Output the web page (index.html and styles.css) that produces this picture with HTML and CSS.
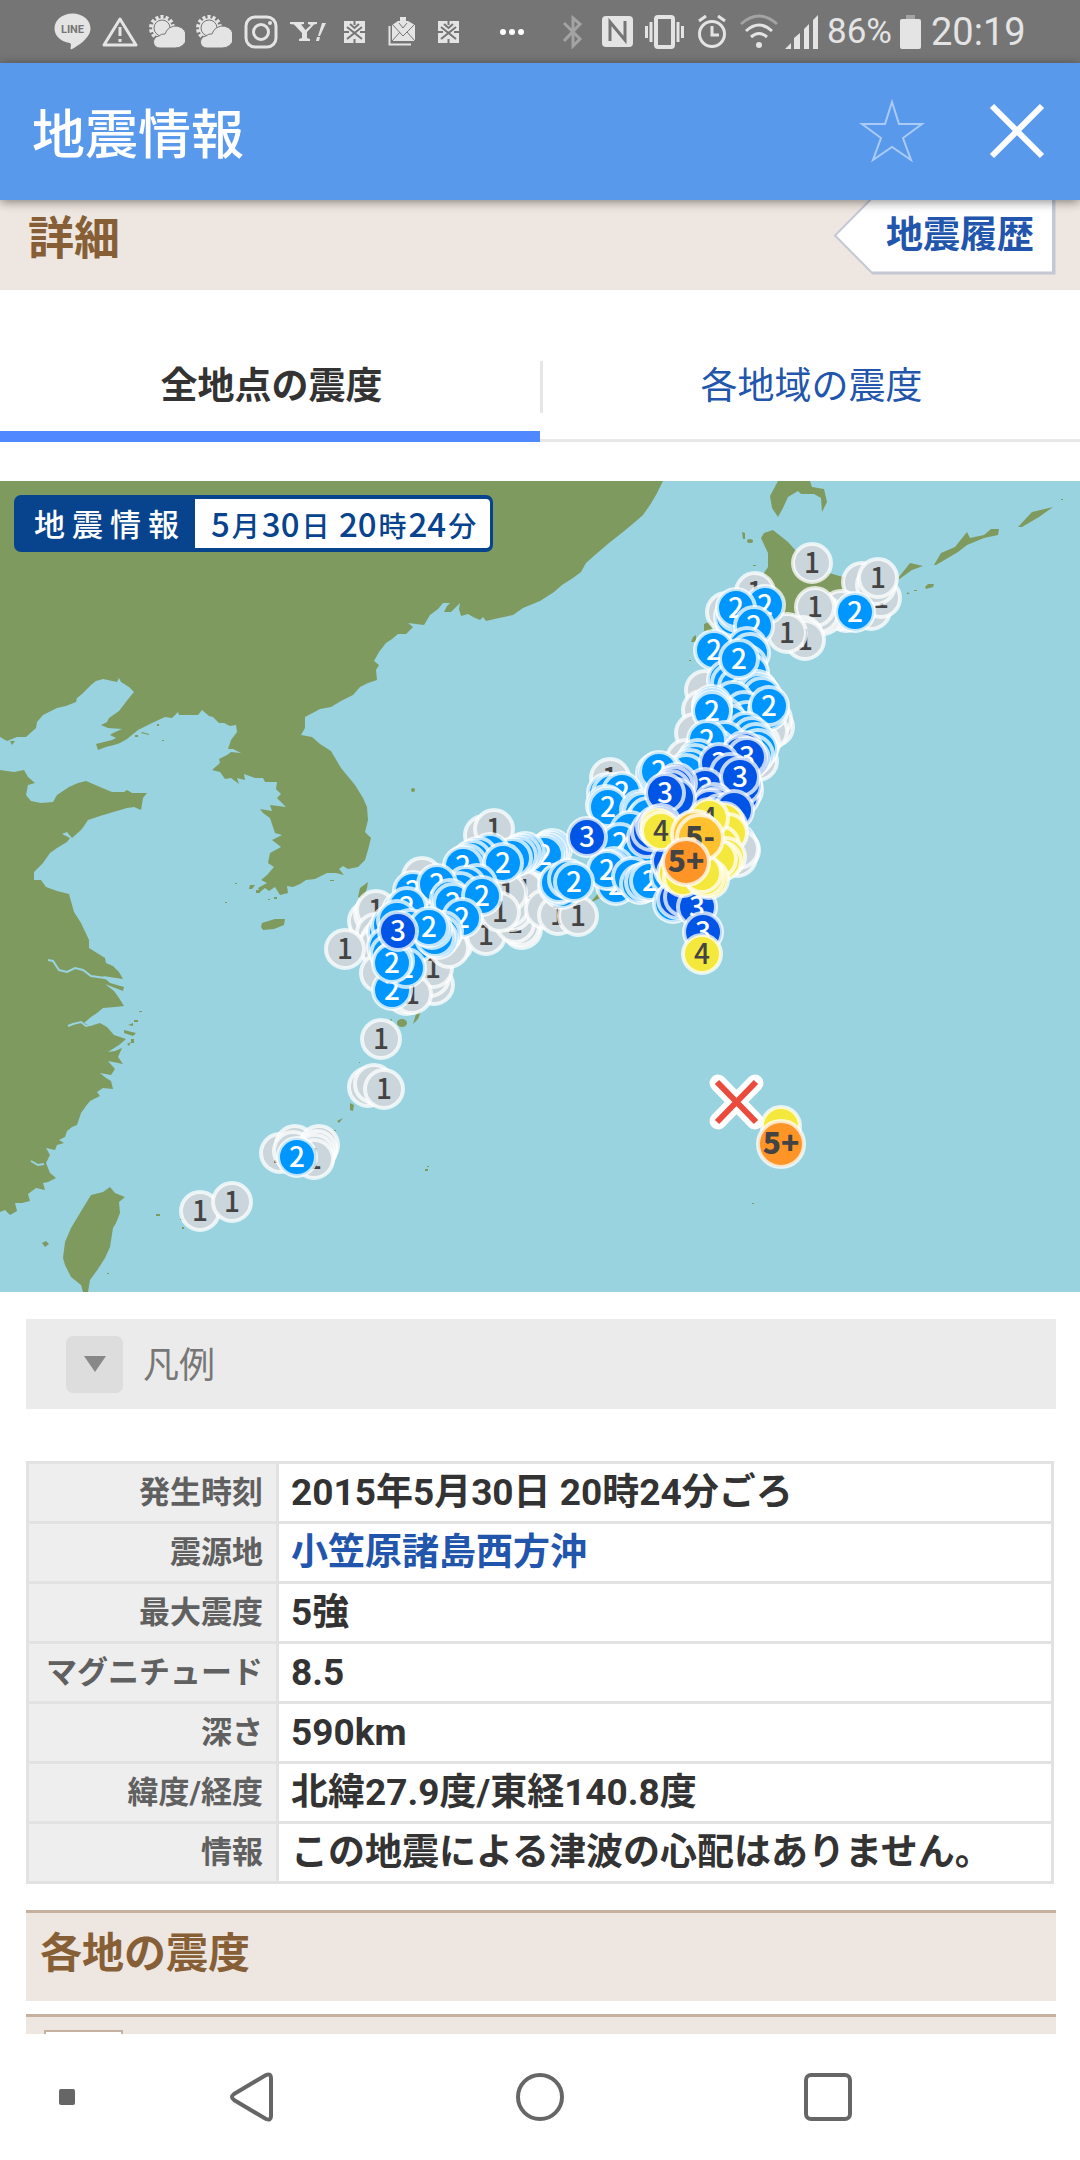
FILE: index.html
```html
<!DOCTYPE html>
<html lang="ja">
<head>
  <meta charset="utf-8">
  <meta name="viewport" content="width=device-width, initial-scale=1">
  <title>地震情報</title>
  <link rel="stylesheet" href="styles.css">
</head>
<body>
  <div class="status">
    <span class="cell"><svg width="37" height="37" viewBox="0 0 37 37"><path class="fill" d="M18.500 .500C8.500.500.500 7 .500 15.500c0 7.500 6.500 13 15 14.500 2 .500 1.500 2 1 5.500 0 .700.500 1 1.500.500C24 33 36.500 25 36.500 15.500 36.500 7 28.500.500 18.500.500z"/><text class="line-text" x="18.500" y="20">LINE</text></svg></span>
    <span class="cell"><svg width="36" height="32" viewBox="0 0 36 32"><path class="line" stroke-width="3" stroke-linejoin="round" d="M18 3 34 29H2z"/><path class="line" stroke-width="3" d="M18 11v9M18 23v3"/></svg></span>
    <span class="cell"><svg width="36" height="34" viewBox="0 0 36 34"><circle class="line" stroke-width="4" stroke-dasharray="3 2" cx="13" cy="13" r="11"/><circle class="fill" cx="13" cy="13" r="10"/><circle class="cut" cx="13" cy="13" r="8"/><path class="fill cloud" d="M11 33a6 6 0 0 1-1-12 7 7 0 0 1 6-2 11 11 0 1 1 10 14z"/></svg></span>
    <span class="cell"><svg width="36" height="34" viewBox="0 0 36 34"><circle class="line" stroke-width="4" stroke-dasharray="3 2" cx="13" cy="13" r="11"/><circle class="fill" cx="13" cy="13" r="10"/><circle class="cut" cx="13" cy="13" r="8"/><path class="fill cloud" d="M11 33a6 6 0 0 1-1-12 7 7 0 0 1 6-2 11 11 0 1 1 10 14z"/></svg></span>
    <span class="cell"><svg width="34" height="34" viewBox="0 0 34 34"><rect class="line" stroke-width="3" x="2" y="2" width="30" height="30" rx="9"/><circle class="line" stroke-width="3" cx="17" cy="17" r="7.500"/><circle class="fill" cx="26" cy="8" r="2"/></svg></span>
    <span class="cell"><svg width="36" height="20" viewBox="0 0 36 20"><path class="fill" d="M0 0h14v2l-3 .500 4.500 5.500L21 3l-3-1V0h9v2l-3 .500L17 10v6l3 1v2H9v-2l3-1v-5L4 2.500 0 2zM32 1h4l-6 13h-2zM27 15h3l-1 4h-3z"/></svg></span>
    <span class="cell"><svg width="23" height="24" viewBox="0 0 23 24"><path class="fill" d="M1 1h21v22H1z"/><path class="gap" d="M11.500 0v5M11.500 19v5M0 12h6M17 12h6M4 7l7.500 6L19 7M4 19l7.500-6 7.500 6M7 4l4.500 4L16 4"/></svg></span>
    <span class="cell"><svg width="28" height="30" viewBox="0 0 28 30"><path class="line" stroke-width="2" d="M1.500 9v18.500H23"/><path class="fill" d="M4 8 10 4h2V0h6v4h2l7 4v16H4z"/><path class="gap thin" d="m4 7 11 12L27 7M4 24l8-9M27 24l-8-9M11 6l4 5 4-5"/></svg></span>
    <span class="cell"><svg width="23" height="24" viewBox="0 0 23 24"><path class="fill" d="M1 1h21v22H1z"/><path class="gap" d="M11.500 0v5M11.500 19v5M0 12h6M17 12h6M4 7l7.500 6L19 7M4 19l7.500-6 7.500 6M7 4l4.500 4L16 4"/></svg></span>
    <span class="cell cell-more"><svg width="26" height="8" viewBox="0 0 26 8"><g fill="#fff"><circle cx="4" cy="4" r="3"/><circle cx="13" cy="4" r="3"/><circle cx="22" cy="4" r="3"/></g></svg></span>
    <span class="cell cell-bt"><svg width="20" height="34" viewBox="0 0 20 34"><path class="line dim" stroke-width="3" d="m1 8 16 16-7 7V3l7 6L1 26"/></svg></span>
    <span class="cell"><svg width="31" height="31" viewBox="0 0 31 31"><rect class="fill" width="31" height="31" rx="4"/><path class="gap nfc" d="M8 25V6l15 18V7M8 25V6M23 24V5"/></svg></span>
    <span class="cell"><svg width="39" height="34" viewBox="0 0 39 34"><rect class="line" stroke-width="4" x="11" y="2" width="17" height="30" rx="2"/><path class="line" stroke-width="3" d="M6 7v20M1.500 11v12M33 7v20M37.500 11v12"/></svg></span>
    <span class="cell"><svg width="30" height="35" viewBox="0 0 30 35"><circle class="line" stroke-width="3" cx="15" cy="20" r="12.500"/><path class="line" stroke-width="3" d="M15 12v9h7M2 7l7-5M28 7l-7-5"/></svg></span>
    <span class="cell"><svg width="40" height="35" viewBox="0 0 40 35"><path class="line dim" stroke-width="3" d="M2 10Q20-6 38 10"/><path class="line" stroke-width="3" d="M7 17q13-12 26 0M12 23q8-7 16 0"/><circle class="fill" cx="20" cy="31" r="3"/></svg></span>
    <span class="cell cell-signal"><svg width="34" height="34" viewBox="0 0 34 34"><path class="fill" d="M0 34l6-6v6zM9 34V23l6-5v16zM19 34V14l5-5v25zM28 34V5l5-5v34z"/></svg></span>
    <span class="battery-text">86%</span>
    <svg class="battery" width="21" height="34" viewBox="0 0 21 34"><path class="dim-fill" d="M6 0h9v4H6z"/><rect class="fill" y="4" width="21" height="30" rx="2"/></svg>
    <span class="clock">20:19</span>
  </div>

  <header class="header">
    <h1>地震情報</h1>
    <button class="icon-btn" aria-label="お気に入り"><svg width="66" height="66" viewBox="0 0 66 66"><path class="star" d="M33 4 40 26H63L44 40 52 62 33 49 14 62 22 40 3 26H26z"/></svg></button>
    <button class="icon-btn" aria-label="閉じる"><svg width="56" height="56" viewBox="0 0 56 56"><path class="close" d="m3 3 50 50M53 3 3 53"/></svg></button>
  </header>

  <main>
    <div class="details">
      <h2>詳細</h2>
      <a class="history" href="#history">
        <svg class="history-bg" viewBox="0 0 222 79" preserveAspectRatio="none"><path d="M219 0v77H39L2 39 39 1"/><path class="edge" d="M220 0v77H39"/></svg>
        <span>地震履歴</span>
      </a>
    </div>

    <div class="tabs" role="tablist">
      <button class="tab active" role="tab" aria-selected="true">全地点の震度</button>
      <button class="tab" role="tab" aria-selected="false">各地域の震度</button>
    </div>

    <section class="map">
      <svg class="map-svg" viewBox="0 0 1080 811">
        <g class="land">
          <!-- 大陸・朝鮮半島 -->
          <path d="M0 0H663L656 14 650 24 643 34 635 41 623 51 609 62 595 74 586 82 581 91 573 97 562 104 554 111 540 120 523 127 513 134 499 137 486 140 483 136 480 139 473 136 468 133 461 135 459 128 460 122 455 127 451 131 444 131 447 125 450 122 443 122 438 128 430 134 424 144 408 142 413 146 406 153 398 153 392 158 386 162 379 171 374 180 379 184 376 189 377 199 368 202 360 206 353 214 341 220 331 226 320 228 305 236 305 247 301 254 312 256 320 263 331 270 341 287 355 304 363 317 367 326 368 339 365 351 371 357 368 369 365 379 358 386 348 388 343 385 339 388 344 394 336 392 327 392 315 398 306 399 300 403 293 406 287 405 288 412 280 414 275 406 269 410 265 407 260 411 258 407 267 402 261 399 267 394 274 386 268 382 270 372 281 366 272 359 282 354 275 352 273 346 270 337 263 332 260 328 272 330 270 324 286 326 277 317 281 313 276 308 277 301 265 301 263 297 255 297 244 293 245 299 237 297 239 303 231 297 225 298 220 291 212 289 220 282 219 278 227 274 231 271 241 272 233 268 228 268 231 259 237 251 236 244 230 245 224 242 219 242 213 236 209 235 202 229 198 234 190 234 179 234 178 231 172 237 165 236 152 242 138 249 127 258 120 262 114 264 106 266 98 269 96 263 112 259 116 257 110 254 113 252 122 248 108 247 101 244 107 241 109 237 119 230 129 217 134 211 129 206 121 201 119 197 117 201 103 198 96 200 91 204 82 213 77 217 76 221 66 225 57 227 43 234 37 241 36 247 26 256 17 256 7 260 0 256z"/>
          <path d="M0 289 14 291 24 289 28 296 35 302 28 304 26 314 31 320 41 322 53 321 57 314 69 306 78 302 86 300 93 303 100 306 112 311 124 311 127 309 132 312 147 312 143 317 141 329 134 326 127 327 110 332 100 335 88 339 84 345 81 349 72 357 67 351 62 353 70 357 67 361 57 367 50 372 43 382 34 391 34 399 41 399 46 406 57 410 69 413 74 431 81 442 89 459 89 467 97 472 105 477 106 482 113 485 119 491 123 498 103 495 110 502 124 506 123 510 105 503 114 510 119 517 124 525 115 526 103 527 97 532 91 536 84 542 90 545 100 542 107 546 114 554 126 558 119 564 108 571 115 570 122 567 118 576 123 583 108 580 115 588 111 594 100 592 106 597 111 600 113 608 103 607 97 611 100 615 90 620 86 625 81 632 77 644 72 646 67 650 65 656 59 659 64 662 57 664 55 669 46 667 50 674 46 682 50 692 56 697 48 701 43 702 45 709 36 707 28 713 30 720 22 722 15 722 17 730 10 734 5 729 0 731z"/>
          <!-- 台湾・済州・対馬 -->
          <path d="M110 706 115 712 125 716 119 721 120 732 116 742 113 747 110 766 105 777 98 788 90 799 88 811H83L81 804 71 796 65 784 63 777 65 761 71 747 83 727 91 714 103 711z"/>
          <path d="M261 446 262 442 275 438 285 438 284 444 274 448 263 449z"/>
          <path d="M358 416 360 407 368 401 367 407 363 419z"/>
          <!-- 樺太・北海道・千島 -->
          <path d="M778 0 770 15 772 27 778 36 783 27 788 16 798 10 801 13 814 13 821 17 822 31 827 21 824 8 812 6 810 0z"/>
          <path d="M764 52 773 49 788 61 797 71 812 86 829 92 843 96 864 89 884 89 884 116 867 129 840 136 815 139 802 139 793 132 788 136 781 142 760 160 750 150 768 120 764 92 768 86 768 72 761 57z"/>
          <path d="M899 96 910 82 923 85 912 89 898 99z"/>
          <path d="M934 84 941 72 955 66 967 51 970 57 984 54 991 48 999 48 998 54 984 57 967 64 958 71 936 84z"/>
          <path d="M1018 46 1032 31 1053 26 1039 36 1022 46z"/>
          <path d="M925 106 928 103 934 103 933 106 926 108z"/>
          <!-- 本州・種子島 -->
          <path d="M704 143 711 140 712 150 704 150zM693 156 696 154 696 161 691 161zM590 422 600 410 610 412z"/>
          <path d="M413 543 416 533 421 530 418 538z"/>
          <ellipse cx="402" cy="542" rx="5" ry="4"/><circle cx="391" cy="539" r="1"/>
          <ellipse cx="750" cy="60" rx="3" ry="2"/><path d="m742 51 3 1v6h-2zM1061 18h2v1h-2zM753 84h3v1h-3zM689 179h2v1h-2z"/>
          <circle cx="413" cy="309" r="2"/><path d="m350 622 4 2-1 6-3-1zM337 640l6-3-4 5zM334 649h2v1h-2zM425 688h3v2h-3zM427 685h2v1h-2zM359 581h1v1h-1zM180 738l5-1v2h-5zM42 762l4-2 3 3-4 3zM156 733h4v2h-4zM182 746h2v2h-2zM107 792h2v1h-2zM752 722h2v1h-2z"/>
          <path d="M124 549l12 3-3 3-9-3zM128 544l5-2v3zM134 539h4v2h-4zM139 530h3v1h-3zM131 558h3v4h-3zM127 563l4-2-2 4zM10 260h5l-3 4zM142 251l7 2v1l-8-2zM157 243h2v2h-2zM162 259h2v1h-2zM135 254h3v2h-3zM250 404h5l-3 4h-3zM256 409h4v3h-4zM268 418h2v1h-2zM274 416h3v2h-3zM235 402h2v1h-2zM225 421h2v1h-2zM330 399h4v1h-4zM907 111l3 2h-3zM914 109h3v1h-3z"/>
        </g>
        <path class="river" d="M48 479l5 1 6 9 8 2 8-4 8 2 8 6 14 2 16 7M68 545l5-2 8-2 5 4 7-2M31 680l7 4 6-1"/>
        <g id="markers" class="markers"></g>
        <g class="epicenter">
          <path class="epi-out" d="m718 602 37 38M755 602 718 640"/>
          <path class="epi-in" d="m717 601 39 40M756 601 717 641"/>
        </g>
      </svg>
      <div class="map-title">
        <span class="map-name">地震情報</span>
        <span class="map-time">5<small>月</small>30<small>日</small> 20<small>時</small>24<small>分</small></span>
      </div>
    </section>

    <button class="legend"><span class="legend-icon"><svg width="22" height="16" viewBox="0 0 22 16"><path d="M0 0h22L11 16z"/></svg></span><span class="legend-text">凡例</span></button>

    <table class="info">
      <tr><th scope="row">発生時刻</th><td>2015年5月30日 20時24分ごろ</td></tr>
      <tr><th scope="row">震源地</th><td><a href="#epicenter">小笠原諸島西方沖</a></td></tr>
      <tr><th scope="row">最大震度</th><td>5強</td></tr>
      <tr><th scope="row">マグニチュード</th><td>8.5</td></tr>
      <tr><th scope="row">深さ</th><td>590km</td></tr>
      <tr><th scope="row">緯度/経度</th><td>北緯27.9度/東経140.8度</td></tr>
      <tr><th scope="row">情報</th><td>この地震による津波の心配はありません。</td></tr>
    </table>

    <h2 class="section-title">各地の震度</h2>
    <div class="section-title next"><span class="level-box"></span></div>
  </main>

  <nav class="navbar">
    <span class="nav-dot"></span>
    <button class="nav-btn" aria-label="戻る"><svg width="44" height="50" viewBox="0 0 44 50"><path d="M4 22 36 3q5-2 5 3v38q0 5-5 3L4 28q-4-3 0-6z"/></svg></button>
    <button class="nav-btn" aria-label="ホーム"><svg width="48" height="48" viewBox="0 0 48 48"><circle cx="24" cy="24" r="22"/></svg></button>
    <button class="nav-btn" aria-label="履歴"><svg width="48" height="48" viewBox="0 0 48 48"><rect x="2" y="2" width="44" height="44" rx="5"/></svg></button>
  </nav>
  <script src="markers.js"></script>
</body>
</html>
```

FILE: styles.css
```css
* {
  box-sizing: border-box;
}

body {
  display: flex;
  flex-direction: column;
  height: 100vh;
  margin: 0;
  background: #fff;
  color: #333;
  font-family: Roboto, "Noto Sans CJK JP", sans-serif;
}

h1,
h2 {
  margin: 0;
}

button {
  padding: 0;
  border: none;
  background: none;
  font-family: inherit;
  cursor: pointer;
}

a {
  color: #2255ac;
  text-decoration: none;
}

svg {
  display: block;
}

/* status bar */
.status {
  display: flex;
  align-items: center;
  flex: none;
  height: 63px;
  padding-left: 49px;
  background: #757575;
  color: #e4e4e4;
}

.cell {
  display: flex;
  flex: none;
  justify-content: center;
  width: 47px;
}

.cell-more {
  width: 80px;
}

.cell-bt {
  width: 42px;
}

.cell-signal {
  width: 39px;
}

.fill {
  fill: #e4e4e4;
}

.line {
  fill: none;
  stroke: #e4e4e4;
}

.dim {
  stroke: #a3a3a3;
}

.dim-fill {
  fill: #a3a3a3;
}

.cut {
  stroke: #757575;
  fill: #e4e4e4;
}

.cloud {
  stroke: #757575;
}

.gap {
  fill: none;
  stroke: #757575;
  stroke-width: 2;
}

.thin {
  stroke-width: 1;
}

.nfc {
  stroke-width: 3;
}

.line-text {
  fill: #757575;
  font-size: 11px;
  font-weight: 700;
  text-anchor: middle;
}

.battery-text {
  width: 76px;
  padding-left: 6px;
  font-size: 35px;
}

.battery {
  margin: 0 10px 0 3px;
}

.clock {
  font-size: 38px;
}

/* header */
.header {
  position: relative;
  z-index: 1;
  display: flex;
  align-items: center;
  flex: none;
  gap: 55px;
  height: 137px;
  padding: 0 28px 2px 32px;
  background: #5999eb;
  box-shadow: 0 2px 10px rgba(0, 0, 0, 0.45);
  color: #fff;
}

.header h1 {
  flex: 1;
  font-size: 53px;
  font-weight: 500;
}

.icon-btn {
  display: flex;
  align-items: center;
  justify-content: center;
  width: 70px;
  height: 70px;
}

.star {
  fill: none;
  stroke: #a9cbf6;
  stroke-width: 2;
}

.close {
  stroke: #fff;
  stroke-width: 6;
}

main {
  flex: 1;
  min-height: 0;
  overflow: hidden;
}

.details {
  display: flex;
  justify-content: space-between;
  align-items: flex-end;
  height: 90px;
  padding: 0 24px 15px 28px;
  background: #eee6e0;
}

.details h2 {
  color: #875f37;
  font-size: 46px;
  line-height: 74px;
}

.history {
  position: relative;
  padding: 0 22px 0 53px;
  font-size: 37px;
  font-weight: 700;
  line-height: 78px;
}

.history span {
  position: relative;
}

.history-bg {
  position: absolute;
  top: 0;
  left: 0;
  width: 100%;
  height: 100%;
  fill: #fff;
  stroke: #c3c8d4;
  stroke-width: 2;
}

.history-bg .edge {
  fill: none;
  stroke-width: 3;
}

/* tabs */
.tabs {
  display: flex;
  margin: 42px 0 39px;
}

.tab {
  flex: 1;
  height: 110px;
  padding: 0 0 8px 3px;
  box-shadow: inset 0 -3px #e8e8e8;
  background: linear-gradient(#e6e6e6, #e6e6e6) 0 29px / 3px 52px no-repeat;
  color: #2255ac;
  font-size: 37px;
}

.tab.active {
  box-shadow: inset 0 -11px #5088ff;
  background: none;
  color: #333;
  font-weight: 700;
}

/* map */
.map {
  position: relative;
  background: #99d3df;
  font-family: "Noto Sans CJK JP", sans-serif;
}

.map-svg {
  width: 100%;
}

.land {
  fill: #7f9a5f;
}

.river {
  fill: none;
  stroke: #99d3df;
  stroke-width: 2;
}

.markers circle {
  stroke: rgba(255, 255, 255, 0.75);
  stroke-width: 4;
}

.markers text {
  fill: #444;
  font-size: 28px;
  font-weight: 500;
  text-anchor: middle;
}

.markers .l1 {
  fill: #cad6db;
}

.markers .l2 {
  fill: #0096ff;
}

.markers .l3 {
  fill: #0055e6;
}

.markers .l4 {
  fill: #f5e83c;
}

.markers .l5 {
  fill: #ffc22e;
}

.markers .l6 {
  fill: #ff9427;
}

.markers .light {
  fill: #fff;
}

.markers .strong {
  font-size: 30px;
  font-weight: 900;
}

.epi-out,
.epi-in {
  stroke: #fff;
  stroke-width: 17;
  stroke-linecap: round;
}

.epi-in {
  stroke: #ea4b3c;
  stroke-width: 6;
  stroke-linecap: butt;
}

.map-title {
  position: absolute;
  top: 14px;
  left: 14px;
  display: flex;
  height: 57px;
  padding: 4px 3px;
  border-radius: 7px;
  background: #08448e;
  line-height: 48px;
}

.map-name {
  width: 178px;
  padding: 0 16px 0 17px;
  color: #fff;
  font-size: 31px;
  font-weight: 500;
  text-align-last: justify;
}

.map-time {
  padding: 0 12px 0 16px;
  border-radius: 0 4px 4px 0;
  background: #fff;
  color: #08448e;
  font-size: 33px;
  font-weight: 500;
}

.map-time small {
  margin: 0 2px;
  font-size: 28px;
}

/* legend */
.legend {
  display: flex;
  align-items: center;
  gap: 20px;
  width: calc(100% - 50px);
  height: 90px;
  margin: 27px 24px 52px 26px;
  padding: 0 40px;
  background: #ebebeb;
  color: #777;
  font-size: 36px;
}

.legend-icon {
  display: flex;
  align-items: center;
  justify-content: center;
  width: 57px;
  height: 57px;
  border-radius: 7px;
  background: #ddd;
}

.legend-icon svg {
  fill: #888;
}

.legend-text {
  padding-bottom: 4px;
}

/* quake data */
.info {
  width: calc(100% - 52px);
  margin: 0 26px 26px;
  border-collapse: collapse;
}

.info th,
.info td {
  height: 60px;
  padding: 2px 13px;
  border: 3px solid #e2e2e2;
  line-height: 53px;
}

.info th {
  width: 250px;
  background: #eee;
  color: #606060;
  font-size: 31px;
  text-align: right;
  white-space: nowrap;
}

.info td {
  padding-left: 12px;
  font-size: 37px;
  font-weight: 700;
}

.section-title {
  height: 91px;
  margin: 0 24px 13px 26px;
  padding-left: 14px;
  border-top: 3px solid #c4b1a0;
  background: #eee6e0;
  color: #875f37;
  font-size: 42px;
  line-height: 82px;
}

.section-title.next {
  padding: 13px 18px;
}

.level-box {
  display: block;
  width: 79px;
  height: 60px;
  border: 2px solid #c4b1a0;
  background: #fff;
}

/* navigation bar */
.navbar {
  position: relative;
  display: grid;
  grid-template-columns: 108px 288px 288px 288px 1fr;
  align-items: center;
  flex: none;
  height: 126px;
  background: #fff;
}

.nav-dot {
  width: 16px;
  height: 16px;
  margin-left: 59px;
  border-radius: 2px;
  background: #666;
}

.nav-btn {
  display: flex;
  justify-content: center;
}

.nav-btn svg {
  fill: none;
  stroke: #666;
  stroke-width: 4;
}
```

FILE: markers.js
```javascript
// x, y, level, label ('' when another station covers it)
// level 5 = 5弱, 6 = 5強
const stations = [
  [812, 82, 1, '1'], [862, 101, 1, ''], [871, 129, 1, ''], [881, 117, 1, '1'], [876, 104, 1, ''], [878, 97, 1, '1'],
  [846, 131, 1, ''], [841, 129, 1, ''], [823, 134, 1, ''], [819, 132, 1, ''], [815, 126, 1, '1'], [803, 155, 1, ''],
  [805, 159, 1, '1'], [787, 152, 1, '1'], [755, 111, 1, '1'], [726, 131, 1, ''], [705, 209, 1, ''],
  [702, 229, 1, ''], [695, 252, 1, ''], [686, 278, 1, ''], [610, 297, 1, '1'], [774, 246, 1, ''], [772, 238, 1, ''],
  [768, 250, 1, ''], [758, 280, 1, ''], [740, 369, 1, ''], [737, 376, 1, ''], [760, 262, 1, ''],
  [855, 131, 2, '2'],

  [370, 446, 1, ''], [368, 440, 1, ''], [374, 433, 1, ''], [376, 429, 1, '1'], [376, 452, 1, ''], [381, 459, 1, ''],
  [378, 465, 1, ''], [345, 468, 1, '1'], [484, 354, 1, ''], [494, 348, 1, '1'], [422, 396, 1, ''], [380, 492, 1, ''],
  [434, 504, 1, ''], [430, 496, 1, ''], [433, 487, 1, '1'], [406, 514, 1, ''], [412, 513, 1, '1'],
  [453, 462, 1, ''], [449, 467, 1, ''], [486, 454, 1, '1'], [538, 426, 1, ''], [530, 420, 1, ''], [533, 413, 1, ''],
  [524, 409, 1, '1'], [522, 448, 1, ''], [520, 445, 1, ''], [515, 442, 1, '1'], [512, 430, 1, ''], [509, 426, 1, ''],
  [507, 412, 1, '1'], [500, 431, 1, '1'], [545, 428, 1, ''], [558, 434, 1, '1'], [578, 435, 1, '1'],

  [381, 558, 1, '1'], [368, 606, 1, ''], [374, 603, 1, ''], [384, 608, 1, '1'],
  [280, 672, 1, '1'], [295, 664, 1, ''], [293, 670, 1, ''], [319, 664, 1, ''], [317, 669, 1, ''], [315, 673, 1, ''],
  [314, 678, 1, '1'], [297, 676, 2, '2'], [200, 730, 1, '1'], [232, 721, 1, '1'],

  // 東北・北海道南部
  [736, 140, 2, ''], [734, 136, 2, ''], [737, 131, 2, ''], [765, 124, 2, '2'], [736, 127, 2, '2'], [754, 145, 2, '2'],
  [747, 166, 2, ''], [750, 172, 2, ''], [747, 184, 2, ''], [749, 192, 2, ''], [714, 169, 2, '2'],
  [727, 199, 2, ''], [731, 202, 2, ''], [738, 206, 2, ''], [747, 214, 2, ''], [757, 209, 2, ''], [759, 212, 2, ''],
  [762, 216, 2, ''], [739, 178, 2, '2'], [733, 220, 2, ''], [744, 230, 2, ''], [747, 240, 2, ''], [724, 236, 2, ''],
  [729, 243, 2, ''], [712, 224, 2, ''], [712, 227, 2, ''], [712, 230, 2, '2'], [768, 230, 2, ''], [769, 225, 2, '2'],
  [746, 251, 2, ''], [752, 256, 2, ''], [756, 262, 2, ''], [758, 268, 2, ''], [754, 274, 2, ''], [725, 260, 2, ''],
  [716, 268, 2, ''], [707, 259, 2, '2'], [698, 278, 2, ''], [695, 283, 2, ''], [690, 288, 2, ''], [686, 293, 2, ''],
  [664, 293, 2, ''], [656, 292, 2, ''], [659, 290, 2, '2'], [685, 330, 2, ''], [665, 330, 2, ''],

  // 中部・近畿
  [607, 312, 2, ''], [612, 312, 2, ''], [622, 311, 2, '2'], [606, 324, 2, ''], [608, 326, 2, '2'], [640, 329, 2, ''],
  [643, 331, 2, ''], [645, 340, 2, ''], [648, 336, 2, ''], [630, 350, 2, ''], [620, 362, 2, '2'], [640, 372, 2, ''],
  [552, 368, 2, ''], [549, 370, 2, ''], [547, 372, 2, ''], [544, 374, 2, '2'], [525, 371, 2, ''],
  [521, 373, 2, ''], [517, 375, 2, ''], [512, 377, 2, ''], [490, 372, 2, ''], [478, 376, 2, ''], [472, 379, 2, ''],
  [467, 383, 2, ''], [463, 385, 2, '2'], [503, 382, 2, '2'], [562, 408, 2, ''], [558, 404, 2, ''], [559, 402, 2, ''],
  [568, 398, 2, ''], [616, 404, 2, '2'], [614, 386, 2, ''], [611, 389, 2, ''], [607, 389, 2, '2'], [574, 401, 2, '2'],
  [632, 396, 2, ''], [640, 403, 2, ''], [645, 401, 2, ''], [650, 400, 2, '2'], [670, 395, 2, ''],

  // 中国・四国・九州
  [477, 403, 2, ''], [466, 405, 2, ''], [460, 411, 2, ''], [413, 410, 2, '2'], [437, 403, 2, '2'], [450, 418, 2, ''],
  [453, 422, 2, '2'], [482, 415, 2, '2'], [462, 437, 2, '2'], [402, 430, 2, ''], [407, 426, 2, '2'], [387, 451, 2, ''],
  [391, 444, 2, ''], [397, 439, 2, ''], [410, 448, 2, ''], [387, 466, 2, ''], [390, 473, 2, ''], [416, 462, 2, ''],
  [443, 450, 2, ''], [441, 454, 2, ''], [438, 458, 2, ''], [435, 456, 2, ''], [432, 448, 2, ''], [429, 446, 2, '2'],
  [392, 509, 2, '2'], [406, 487, 2, '2'], [394, 480, 2, ''], [392, 482, 2, '2'], [398, 450, 3, '3'],
  [673, 422, 2, ''],

  // 関東
  [744, 270, 3, ''], [741, 274, 3, ''], [750, 278, 3, ''], [747, 276, 3, '3'], [719, 282, 3, '3'], [730, 292, 3, ''],
  [705, 307, 3, '3'], [743, 309, 3, ''], [740, 315, 3, ''], [742, 304, 3, ''], [740, 296, 3, '3'],
  [714, 322, 3, ''], [716, 326, 3, ''], [710, 328, 3, ''], [720, 333, 3, ''], [734, 329, 3, ''],
  [677, 302, 3, ''], [674, 305, 3, ''], [671, 309, 3, ''], [676, 317, 3, ''], [665, 312, 3, '3'],
  [587, 356, 3, '3'], [647, 357, 3, ''], [651, 350, 3, ''], [656, 345, 3, ''], [661, 343, 3, ''],
  [736, 362, 3, ''], [739, 368, 1, ''], [674, 388, 3, ''], [671, 380, 3, ''],
  [677, 418, 3, ''], [684, 416, 3, ''], [697, 426, 3, '3'], [703, 451, 3, '3'], [702, 473, 4, '4'],

  [692, 370, 4, ''], [700, 350, 4, ''], [727, 345, 4, ''], [724, 341, 4, ''], [728, 352, 4, ''], [720, 364, 4, ''],
  [726, 376, 4, ''], [722, 380, 4, ''], [717, 378, 4, ''], [680, 386, 4, ''], [677, 392, 4, ''], [683, 396, 4, ''],
  [709, 398, 4, ''], [705, 396, 4, ''], [702, 392, 4, ''], [659, 346, 4, ''], [661, 350, 4, '4'], [709, 337, 4, '4'],
  [695, 353, 5, ''], [700, 357, 5, '5-'], [686, 381, 6, '5+'],

  [781, 645, 4, ''], [781, 663, 6, '5+']
];

const ns = 'http://www.w3.org/2000/svg';
const layer = document.getElementById('markers');

stations.forEach(([x, y, level, label]) => {
  const dot = document.createElementNS(ns, 'circle');
  dot.setAttribute('cx', x);
  dot.setAttribute('cy', y);
  dot.setAttribute('r', level > 4 ? 23 : 19);
  dot.setAttribute('class', 'l' + level);
  layer.appendChild(dot);

  if (!label) return;
  const text = document.createElementNS(ns, 'text');
  text.setAttribute('x', x);
  text.setAttribute('y', y + 10);
  if (level === 2 || level === 3) text.setAttribute('class', 'light');
  if (level > 4) text.setAttribute('class', 'strong');
  text.textContent = label;
  layer.appendChild(text);
});
```
